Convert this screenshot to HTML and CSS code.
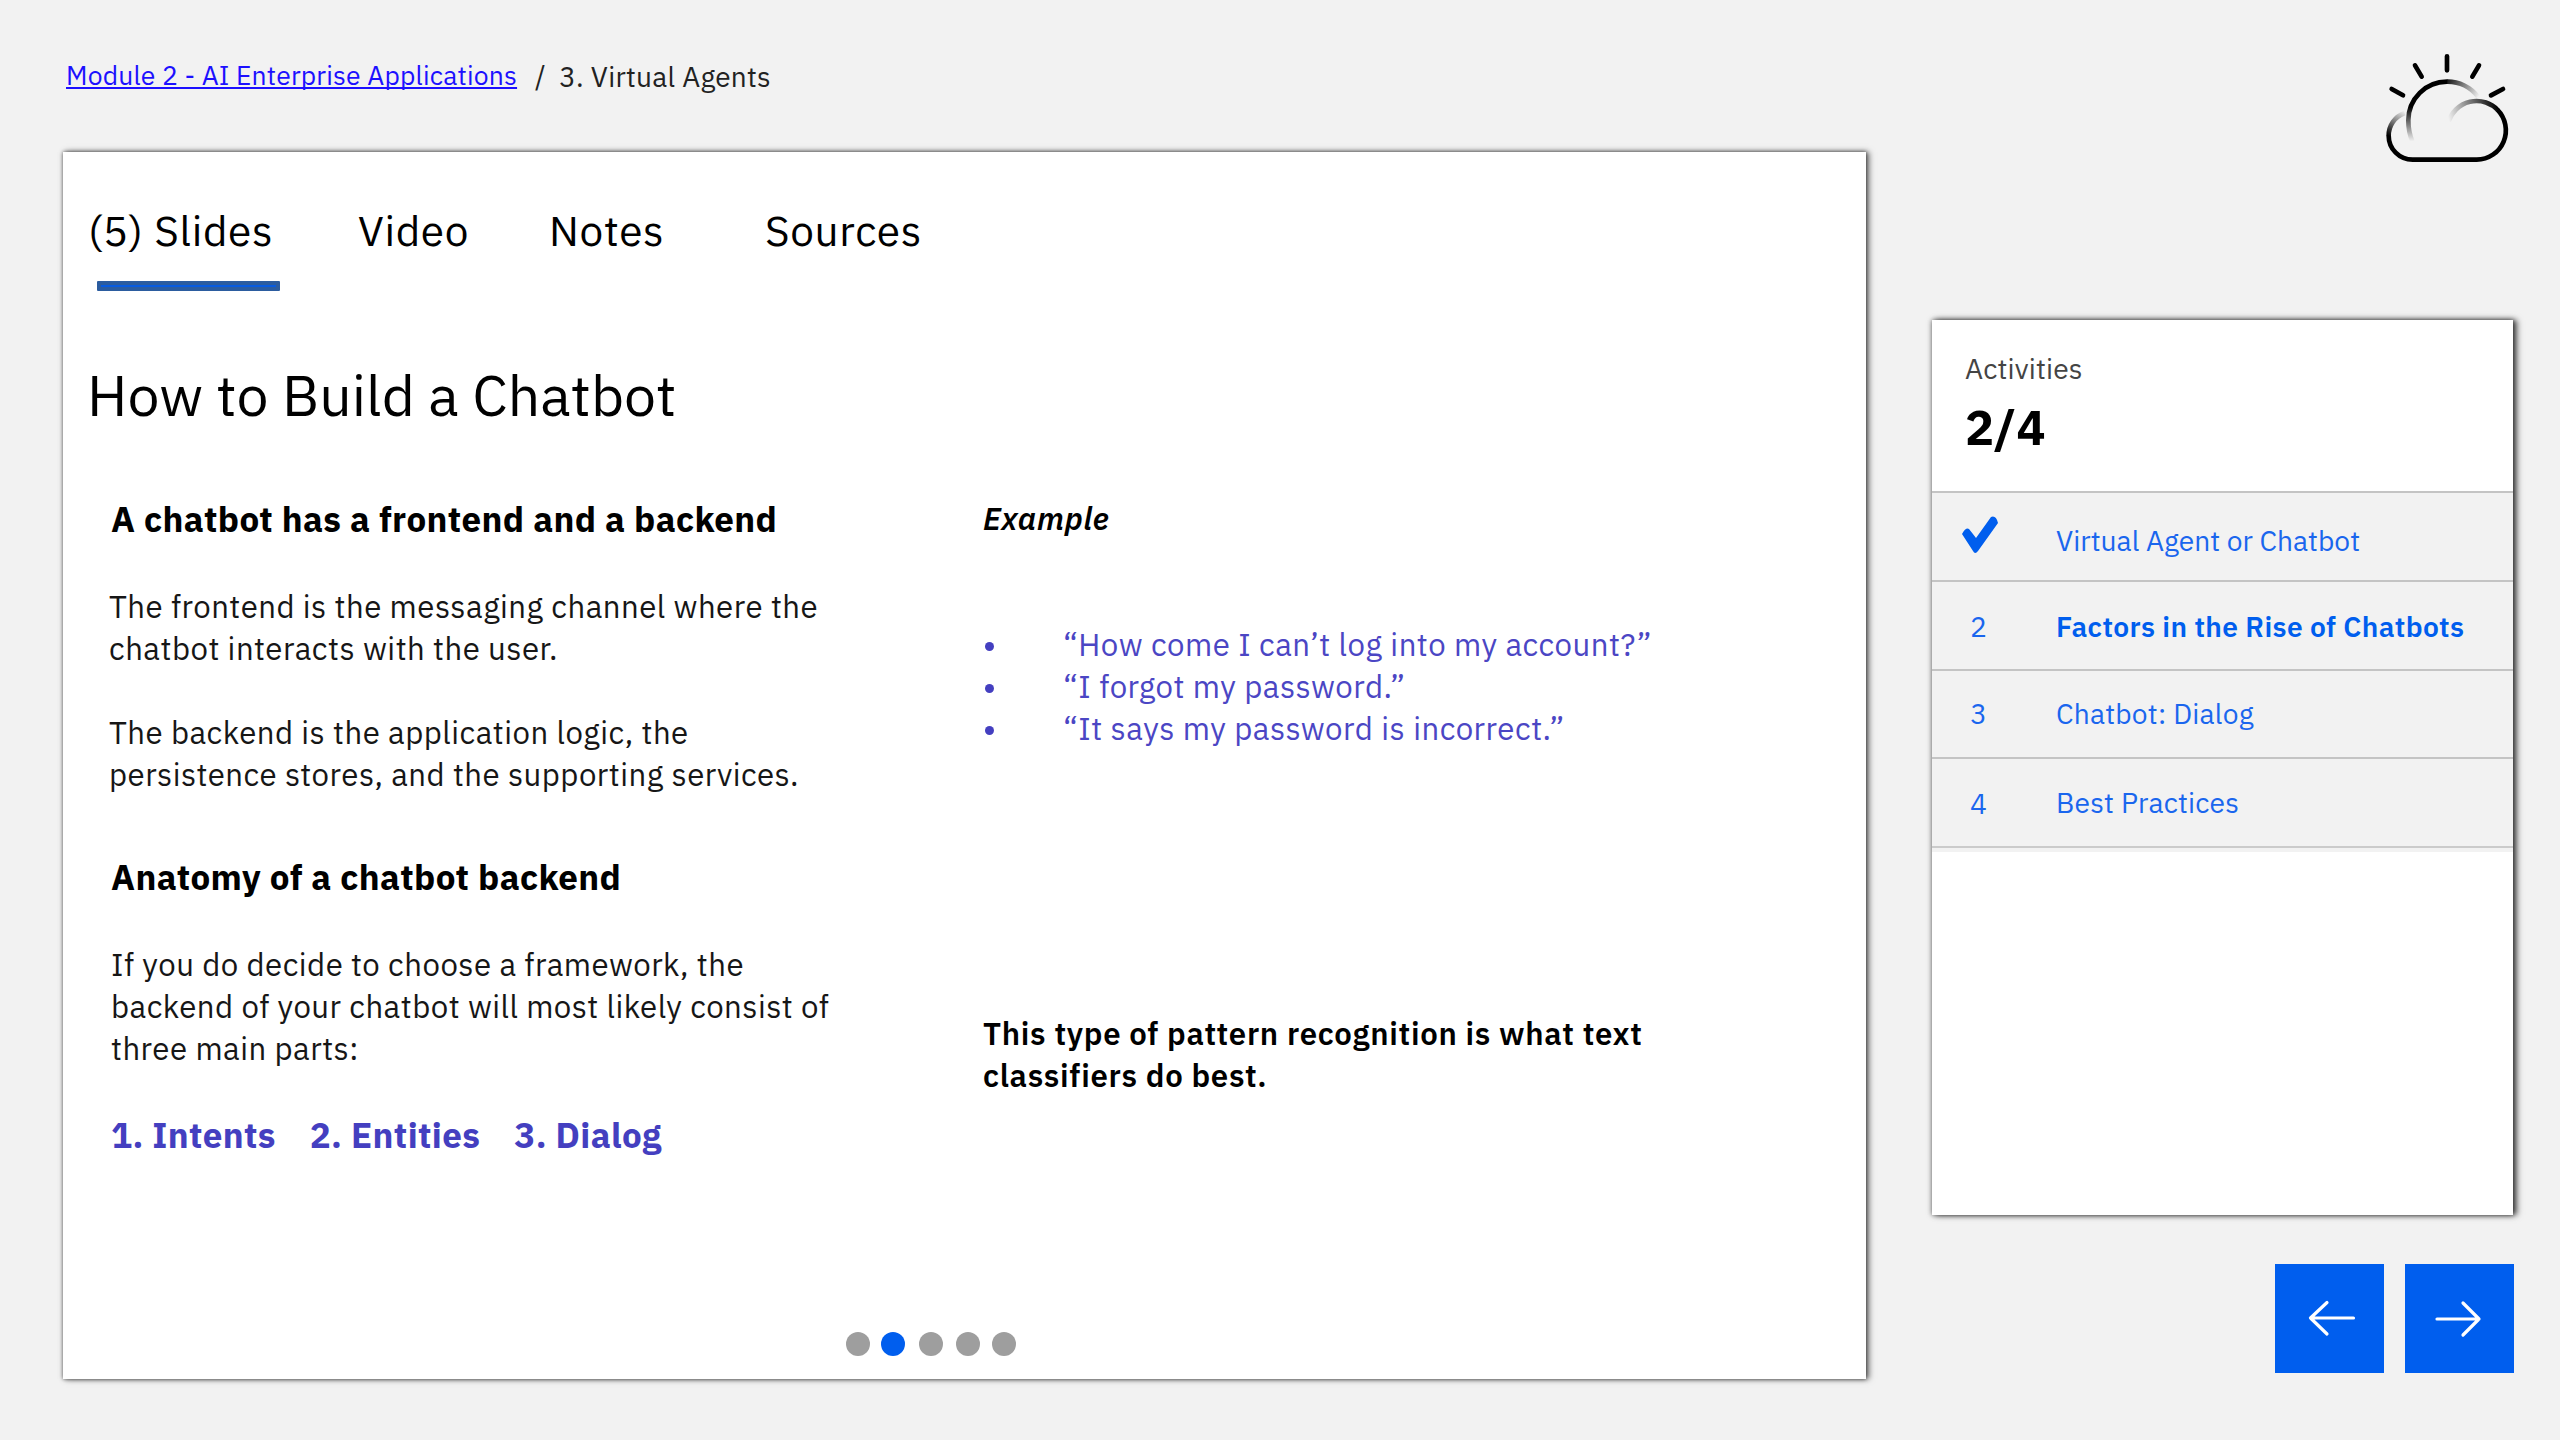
FILE: index.html
```html
<!DOCTYPE html>
<html lang="en">
<head>
<meta charset="utf-8">
<title>3. Virtual Agents</title>
<link rel="stylesheet" href="styles.css">
</head>
<body>
<div class="app">
  <main class="main">
    <nav class="crumbs">
      <a class="crumb-link" href="#">Module 2 - AI Enterprise Applications</a>
      <span class="crumb-sep">/</span>
      <span class="crumb-current">3. Virtual Agents</span>
    </nav>
    <section class="panel">
      <div class="tabs">
        <span class="tab tab-active">(5) Slides</span>
        <span class="tab">Video</span>
        <span class="tab">Notes</span>
        <span class="tab">Sources</span>
      </div>
      <h1 class="title">How to Build a Chatbot</h1>
      <div class="columns">
        <div class="col-left">
          <h2 class="heading">A chatbot has a frontend and a backend</h2>
          <p class="text">The frontend is the messaging channel where the<br>chatbot interacts with the user.</p>
          <p class="text text-next">The backend is the application logic, the<br>persistence stores, and the supporting services.</p>
          <h2 class="heading heading-next">Anatomy of a chatbot backend</h2>
          <p class="text text-parts">If you do decide to choose a framework, the<br>backend of your chatbot will most likely consist of<br>three main parts:</p>
          <div class="parts"><span>1. Intents</span><span>2. Entities</span><span>3. Dialog</span></div>
        </div>
        <div class="col-right">
          <h3 class="example">Example</h3>
          <ul class="quotes">
            <li>“How come I can’t log into my account?”</li>
            <li>“I forgot my password.”</li>
            <li>“It says my password is incorrect.”</li>
          </ul>
          <p class="statement">This type of pattern recognition is what text<br>classifiers do best.</p>
        </div>
      </div>
      <div class="dots"><i class="dot"></i><i class="dot dot-on"></i><i class="dot"></i><i class="dot"></i><i class="dot"></i></div>
    </section>
  </main>
  <aside class="side">
    <svg class="weather" viewBox="0 0 510 420" fill="none" stroke-width="14" stroke-linecap="round">
      <defs>
        <linearGradient id="sunLeft" gradientUnits="userSpaceOnUse" x1="0" y1="200" x2="0" y2="304"><stop offset="0" stop-color="#000"/><stop offset="1" stop-color="#000" stop-opacity="0"/></linearGradient>
        <linearGradient id="sunRight" gradientUnits="userSpaceOnUse" x1="250" y1="120" x2="356" y2="172"><stop offset="0" stop-color="#000"/><stop offset="1" stop-color="#000" stop-opacity="0"/></linearGradient>
        <linearGradient id="cloudLeft" gradientUnits="userSpaceOnUse" x1="90" y1="290" x2="136" y2="214"><stop offset="0" stop-color="#000"/><stop offset="1" stop-color="#000" stop-opacity="0"/></linearGradient>
        <linearGradient id="cloudRight" gradientUnits="userSpaceOnUse" x1="266" y1="240" x2="412" y2="200"><stop offset="0" stop-color="#000" stop-opacity="0"/><stop offset="1" stop-color="#000"/></linearGradient>
      </defs>
      <g stroke="#000">
        <path d="M261 49V91M165 76L185 110M357 76L337 110M95 147L129 166M429 147L393 166"/>
        <path stroke-linecap="butt" d="M86 287A72 72 0 0 0 158 359H350A88 88 0 0 0 412 209"/>
      </g>
      <g stroke-linecap="butt">
        <path stroke="url(#cloudLeft)" d="M86 288A72 72 0 0 1 134 219"/>
        <path stroke="url(#cloudRight)" d="M266 244A88 88 0 0 1 413 210"/>
        <path stroke="url(#sunLeft)" d="M157 304Q145 276 145 241A116 116 0 0 1 262 125"/>
        <path stroke="url(#sunRight)" d="M261 125A116 116 0 0 1 354 170"/>
      </g>
    </svg>
    <section class="card">
      <header class="card-head">
        <div class="card-label">Activities</div>
        <div class="card-count">2/4</div>
      </header>
      <div class="rows">
        <div class="row"><span class="num"><svg class="check" viewBox="0 0 36 37"><path fill="#005eee" d="M0 18Q4 11 7 13Q11 18 14 22L29 1Q34-1 36 7L16 35Q13 39 11 35Z"/></svg></span><span class="name">Virtual Agent or Chatbot</span></div>
        <div class="row"><span class="num">2</span><span class="name name-on">Factors in the Rise of Chatbots</span></div>
        <div class="row"><span class="num">3</span><span class="name">Chatbot: Dialog</span></div>
        <div class="row"><span class="num num-last">4</span><span class="name">Best Practices</span></div>
      </div>
    </section>
    <div class="pager">
      <button class="btn" aria-label="Previous"><svg viewBox="0 0 109 109"><path d="M78.500 54H35.500M52 38.500L35.500 54L52 70"/></svg></button>
      <button class="btn" aria-label="Next"><svg viewBox="0 0 109 109"><path d="M32 55H74M58 39L74 55L58 71"/></svg></button>
    </div>
  </aside>
</div>
</body>
</html>
```
FILE: styles.css
```css
*, *::before, *::after { box-sizing: border-box; margin: 0; padding: 0; }
body { width: 2560px; height: 1440px; overflow: hidden; background: #f2f2f2; color: #000; font-family: "IBM Plex Sans", "Noto Sans", sans-serif; }
.app { display: flex; width: 2560px; height: 1440px; padding-left: 63px; gap: 67px; }
.main { width: 1803px; flex: none; }

.crumbs { display: flex; height: 152px; padding: 57px 0 0 3px; font-size: 28px; line-height: 37px; letter-spacing: .25px; color: #222; white-space: nowrap; }
.crumb-link { padding-top: 1px; font-size: 26.5px; line-height: 35px; letter-spacing: .17px; color: #1c10ff; text-decoration-thickness: 2px; text-underline-offset: 2px; text-decoration-skip-ink: none; }
.crumb-sep { margin-left: 18px; }
.crumb-current { margin-left: 13px; padding-top: 1px; }

.panel { display: flex; flex-direction: column; width: 1803px; height: 1227px; padding-bottom: 23px; background: #fff; box-shadow: 3px 0 6px rgba(0, 0, 0, .55), 0 0 4px rgba(0, 0, 0, .6); }
.tabs { display: grid; grid-template-columns: 270px 191px 216px auto; margin: 49px 0 0 25px; height: 90px; font-size: 42.3px; line-height: 60px; letter-spacing: .65px; }
.tab-active::after { content: ""; display: block; width: 183px; height: 10px; margin: 20px 0 0 9px; border: 4px solid #2b5c9f; border-radius: 1px; background: #075be0; }
.title { margin: 66px 0 0 24px; font-size: 57.2px; line-height: 75px; font-weight: 400; }
.columns { display: grid; grid-template-columns: 874px auto; margin: 64px 0 0 46px; }
.heading { margin-left: 2px; font-size: 35px; line-height: 47px; font-weight: 700; letter-spacing: .4px; }
.heading-next { margin-top: 58px; }
.text { margin-top: 43px; font-size: 31.2px; line-height: 42px; letter-spacing: .47px; color: #161616; }
.text-next { margin-top: 42px; }
.text-parts { margin-left: 2px; }
.parts { display: flex; gap: 34px; margin: 42px 0 0 2px; font-size: 35px; line-height: 47px; font-weight: 700; letter-spacing: .38px; color: #443fc0; }
.col-right { font-size: 31.2px; line-height: 42px; letter-spacing: .5px; }
.example { margin-top: 2px; font-size: 31px; font-weight: 600; font-style: italic; letter-spacing: .8px; }
.quotes { margin-top: 84px; color: #4b46c4; list-style: none; }
.quotes li { display: flex; align-items: center; gap: 69px; }
.quotes li::before { content: ""; width: 9px; height: 9px; margin: 2px 0 0 2px; border-radius: 50%; background: #443fc0; }
.statement { margin-top: 263px; font-weight: 600; letter-spacing: .69px; }
.dots { display: flex; gap: 12.5px; margin: auto 0 0 783px; }
.dot { width: 24px; height: 24px; border-radius: 50%; background: #9e9e9e; }
.dot-on { margin: 0 1.5px 0 -1.5px; background: #005eee; }

.side { width: 600px; }
.weather { display: block; width: 170px; height: 140px; margin: 40px 0 0 427px; }
.card { width: 581px; height: 895px; margin: 140px 0 0 -1px; background: #fff; box-shadow: 4px 0 6px rgba(0, 0, 0, .65), 0 0 5px rgba(0, 0, 0, .6); }
.card-head { height: 171px; padding: 29px 0 0 33px; }
.card-label { font-size: 28.2px; line-height: 40px; letter-spacing: .15px; color: #444; }
.card-count { margin-top: 6px; font-size: 48.5px; line-height: 64px; font-weight: 700; }
.rows { background: #f2f2f2; padding-bottom: 4px; font-size: 28.2px; line-height: 37px; letter-spacing: .2px; color: #1a66ee; }
.row { display: grid; grid-template-columns: 124px auto; height: 88.75px; padding-top: 26px; border-top: 2px solid #c4c4c4; }
.row:nth-child(1) { padding-top: 29px; letter-spacing: 0; }
.row:nth-child(3) { padding-top: 24px; }
.row:nth-child(4) { height: 90.75px; padding-top: 25px; border-bottom: 2px solid #cbcbcb; }
.num { padding-left: 38px; }
.num-last { padding-top: 1px; }
.name-on { font-weight: 600; letter-spacing: .36px; color: #005eee; }
.check { display: block; width: 36px; height: 37px; margin: -6px 0 0 -8px; }
.pager { display: flex; gap: 21px; margin: 49px 0 0 342px; }
.btn { width: 109px; height: 109px; border: 0; background: #005eee; }
.btn svg { display: block; width: 109px; height: 109px; fill: none; stroke: #fff; stroke-width: 3.2; stroke-linecap: round; stroke-linejoin: round; }
```
